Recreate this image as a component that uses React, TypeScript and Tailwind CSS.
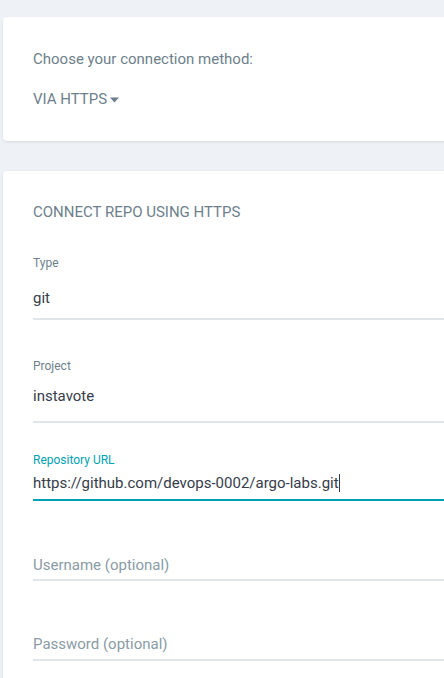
import React from 'react';

const font = { fontFamily: 'Roboto, "Liberation Sans", sans-serif' };

export default function App() {
  return (
    <div className="w-[444px] h-[678px] overflow-hidden bg-[#eef1f5]" style={font}>
      <div className="pt-[17px] pl-[3px]">
        {/* connection method card */}
        <div className="w-[470px] h-[124px] bg-white rounded-[4px] shadow-[0_1px_3px_rgba(0,0,0,0.1)] pl-[30px] pt-[32px]">
          <div className="text-[15px] leading-[20px] text-[#6d7f8b]">Choose your connection method:</div>
          <div className="mt-[20px] flex items-center text-[15px] leading-[20px] text-[#6d7f8b]">
            VIA HTTPS
            <svg width="9" height="6" viewBox="0 0 9 6" className="ml-[3px] mt-[1px]">
              <path d="M0 0.5h9L4.5 5.5z" fill="#6d7f8b" />
            </svg>
          </div>
        </div>

        {/* repo card */}
        <div className="mt-[30px] w-[470px] h-[520px] bg-white rounded-[4px] shadow-[0_1px_3px_rgba(0,0,0,0.1)] pl-[30px] pt-[30px]">
          <div className="text-[15px] leading-[22px] text-[#6d7f8b]">CONNECT REPO USING HTTPS</div>

          <div className="mt-[32px] text-[12px] leading-[16px] text-[#6d7f8b]">Type</div>
          <div className="mt-[17px] text-[15px] leading-[20px] text-[#363c4a] pb-[10px] border-b-2 border-[#dee6eb]">git</div>

          <div className="mt-[38px] text-[12px] leading-[16px] text-[#6d7f8b]">Project</div>
          <div className="mt-[12px] text-[15px] leading-[20px] text-[#363c4a] pb-[15px] border-b-2 border-[#dee6eb]">instavote</div>

          <div className="mt-[29px] text-[12px] leading-[16px] text-[#00a2b3]">Repository URL</div>
          <div className="mt-[5px] text-[15px] leading-[20px] text-[#363c4a] pb-[6px] border-b-2 border-[#00a2b3] flex items-center">
            https://github.com/devops-0002/argo-labs.git
            <span className="inline-block w-px h-[18px] bg-[#363c4a]" />
          </div>

          <div className="mt-[54px] text-[15px] leading-[20px] text-[#8a9ba6] pb-[4px] border-b-2 border-[#dee6eb]">Username (optional)</div>

          <div className="mt-[53px] text-[15px] leading-[20px] text-[#8a9ba6] pb-[5px] border-b-2 border-[#dee6eb]">Password (optional)</div>
        </div>
      </div>
    </div>
  );
}
